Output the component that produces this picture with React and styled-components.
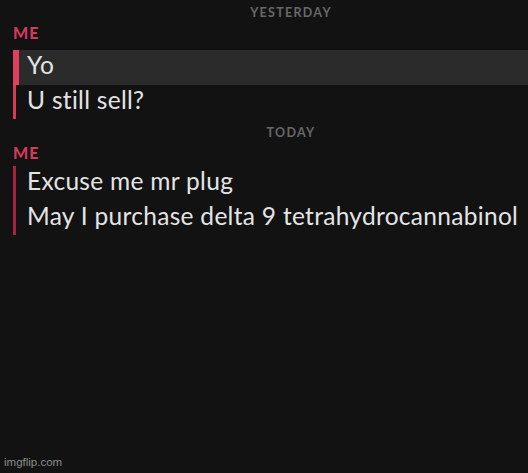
import React from 'react';
import styled, { createGlobalStyle } from 'styled-components';

const GlobalStyle = createGlobalStyle`
  html, body {
    margin: 0;
    padding: 0;
    background: #121212;
  }
`;

const Screen = styled.div`
  width: 528px;
  height: 473px;
  background: #121212;
  display: flex;
  flex-direction: column;
  font-family: Lato, 'Open Sans', sans-serif;
  overflow: hidden;
`;

const DayLabel = styled.div`
  padding-left: 54px;
  margin-top: ${(p) => p.$top}px;
  text-align: center;
  color: #686868;
  font-size: 12.5px;
  line-height: 14px;
  font-weight: 700;
  letter-spacing: 1.3px;
`;

const Sender = styled.div`
  margin: ${(p) => p.$top}px 0 0 13px;
  color: #d13a5b;
  font-size: 16px;
  line-height: 16px;
  font-weight: 900;
  letter-spacing: 1px;
`;

const Thread = styled.div`
  margin-top: ${(p) => p.$top}px;
  display: flex;
  flex-direction: column;
  padding-left: 13px;
`;

const Line = styled.div`
  height: 34.5px;
  box-sizing: border-box;
  border-left: ${(p) => (p.$active ? 6 : 3)}px solid ${(p) => p.$bar};
  padding-left: ${(p) => (p.$active ? 8 : 11)}px;
  background: ${(p) => (p.$active ? '#2b2b2b' : 'transparent')};
  color: #e4e4e4;
  font-size: 24.5px;
  line-height: 30px;
  letter-spacing: 0.3px;
  white-space: nowrap;
`;

const Watermark = styled.div`
  margin: auto 0 4px 4px;
  color: #8c8c8c;
  font-family: 'Liberation Sans', Arial, sans-serif;
  font-size: 11.5px;
  line-height: 13px;
`;

export default function App() {
  return (
    <Screen>
      <GlobalStyle />
      <DayLabel $top={6}>YESTERDAY</DayLabel>
      <Sender $top={5}>ME</Sender>
      <Thread $top={9}>
        <Line $active $bar="#e0405f">Yo</Line>
        <Line $bar="#d8385a">U still sell?</Line>
      </Thread>
      <DayLabel $top={7}>TODAY</DayLabel>
      <Sender $top={5}>ME</Sender>
      <Thread $top={5}>
        <Line $bar="#a82244">Excuse me mr plug</Line>
        <Line $bar="#a82244">May I purchase delta 9 tetrahydrocannabinol</Line>
      </Thread>
      <Watermark>imgflip.com</Watermark>
    </Screen>
  );
}
